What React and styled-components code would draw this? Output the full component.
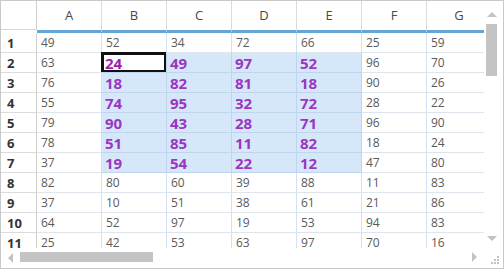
import React from 'react';
import styled, { createGlobalStyle, css } from 'styled-components';

const GlobalStyle = createGlobalStyle`
  html, body {
    margin: 0;
    padding: 0;
    background: #fff;
  }
  body {
    font-family: "Open Sans", "Noto Sans", "Liberation Sans", sans-serif;
  }
`;

const COLUMNS = ['A', 'B', 'C', 'D', 'E', 'F', 'G'];

const DATA = [
  [49, 52, 34, 72, 66, 25, 59],
  [63, 24, 49, 97, 52, 96, 70],
  [76, 18, 82, 81, 18, 90, 26],
  [55, 74, 95, 32, 72, 28, 22],
  [79, 90, 43, 28, 71, 96, 90],
  [78, 51, 85, 11, 82, 18, 24],
  [37, 19, 54, 22, 12, 47, 80],
  [82, 80, 60, 39, 88, 11, 83],
  [37, 10, 51, 38, 61, 21, 86],
  [64, 52, 97, 19, 53, 94, 83],
  [25, 42, 53, 63, 97, 70, 16],
];

// selection B2:E7, active cell B2
const isSelected = (r, c) => r >= 1 && r <= 6 && c >= 1 && c <= 4;
const isActive = (r, c) => r === 1 && c === 1;

const Frame = styled.div`
  width: 504px;
  height: 269px;
  box-sizing: border-box;
  border: 1px solid #c9c9c9;
  display: grid;
  grid-template-columns: 483px 19px;
  grid-template-rows: 247px 20px;
  background: #fff;
`;

const Viewport = styled.div`
  overflow: hidden;
`;

const Sheet = styled.div`
  display: grid;
  grid-template-columns: 36px repeat(7, 65px);
  grid-auto-rows: 20px;
  grid-template-rows: 32px;
`;

const Corner = styled.div`
  height: 29px;
  box-sizing: border-box;
  border-right: 1px solid #cfcfcf;
  border-bottom: 1px solid #d6d6d6;
`;

const ColHeader = styled.div`
  box-sizing: border-box;
  border-right: 1px solid #dadada;
  border-bottom: 3px solid #62a7d7;
  display: flex;
  align-items: center;
  justify-content: center;
  padding-bottom: 2px;
  font-size: 13px;
  color: #4a4a4a;
`;

const RowHeader = styled.div`
  box-sizing: border-box;
  border-right: 1px solid #cfcfcf;
  border-bottom: 1px solid #dcdcdc;
  display: flex;
  align-items: center;
  padding-left: 6px;
  font-size: 13px;
  font-weight: 700;
  color: #333;
`;

const Cell = styled.div`
  box-sizing: border-box;
  border-right: 1px solid #d3e2f2;
  border-bottom: 1px solid #dfe5ec;
  display: flex;
  align-items: center;
  padding-left: 4px;
  font-size: 12px;
  color: #5a5a5a;
  white-space: nowrap;

  ${(p) => p.$selected && css`
    background: #d5e7f8;
    border-right-color: #bdd6ee;
    border-bottom-color: #bdd6ee;
    font-size: 15px;
    font-weight: 700;
    color: #9a36c1;
    padding-left: 3px;
  `}

  ${(p) => p.$active && css`
    background: #fff;
    color: #a01dab;
    box-shadow: inset 0 0 0 2px #111, -1px -1px 0 0 #111;
  `}
`;

const VScroll = styled.div`
  display: flex;
  flex-direction: column;
  align-items: flex-start;
  padding-left: 2px;
`;

const HScroll = styled.div`
  display: flex;
  align-items: flex-start;
`;

const ArrowBox = styled.div`
  width: ${(p) => p.$w}px;
  height: ${(p) => p.$h}px;
  display: flex;
  align-items: center;
  justify-content: center;
  flex: none;
`;

const Spacer = styled.div`
  flex: 1;
`;

const Arrow = styled.div`
  width: 0;
  height: 0;
  ${(p) => p.$dir === 'up' && css`
    border-left: 5px solid transparent;
    border-right: 5px solid transparent;
    border-bottom: 5px solid #c3c3c3;
  `}
  ${(p) => p.$dir === 'down' && css`
    border-left: 5px solid transparent;
    border-right: 5px solid transparent;
    border-top: 5px solid #c3c3c3;
  `}
  ${(p) => p.$dir === 'left' && css`
    border-top: 5px solid transparent;
    border-bottom: 5px solid transparent;
    border-right: 5px solid #c3c3c3;
  `}
  ${(p) => p.$dir === 'right' && css`
    border-top: 5px solid transparent;
    border-bottom: 5px solid transparent;
    border-left: 5px solid #c3c3c3;
  `}
`;

const Thumb = styled.div`
  background: #c4c4c4;
  flex: none;
  ${(p) => p.$vertical ? css`
    width: 11px;
    height: 52px;
  ` : css`
    width: 133px;
    height: 10px;
    margin-top: 4px;
  `}
`;

const Grip = styled.div`
  display: flex;
  align-items: flex-end;
  justify-content: flex-end;
  padding: 0 4px 4px 0;
`;

function ResizeGrip() {
  const dots = [[7, 1], [4, 4], [7, 4], [1, 7], [4, 7], [7, 7]];
  return (
    <svg width="9" height="9" viewBox="0 0 9 9">
      {dots.map(([x, y], i) => (
        <rect key={i} x={x} y={y} width="2" height="2" fill="#c3c3c3" />
      ))}
    </svg>
  );
}

export default function App() {
  return (
    <>
      <GlobalStyle />
      <Frame>
        <Viewport>
          <Sheet>
            <Corner />
            {COLUMNS.map((c) => (
              <ColHeader key={c}>{c}</ColHeader>
            ))}
            {DATA.map((row, r) => (
              <React.Fragment key={r}>
                <RowHeader>{r + 1}</RowHeader>
                {row.map((v, c) => (
                  <Cell key={c} $selected={isSelected(r, c)} $active={isActive(r, c)}>
                    {v}
                  </Cell>
                ))}
              </React.Fragment>
            ))}
          </Sheet>
        </Viewport>
        <VScroll>
          <ArrowBox $w={11} $h={19} style={{ paddingTop: 4, boxSizing: 'content-box' }}>
            <Arrow $dir="up" />
          </ArrowBox>
          <Thumb $vertical />
          <Spacer />
          <ArrowBox $w={11} $h={19}>
            <Arrow $dir="down" />
          </ArrowBox>
        </VScroll>
        <HScroll>
          <ArrowBox $w={19} $h={20}>
            <Arrow $dir="left" />
          </ArrowBox>
          <Thumb />
          <Spacer />
          <ArrowBox $w={19} $h={18}>
            <Arrow $dir="right" />
          </ArrowBox>
        </HScroll>
        <Grip>
          <ResizeGrip />
        </Grip>
      </Frame>
    </>
  );
}
